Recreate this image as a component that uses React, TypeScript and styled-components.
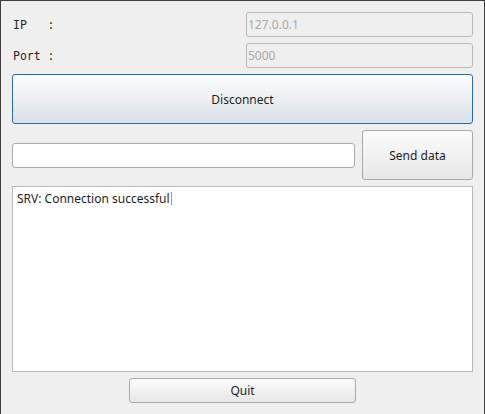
import React from "react";
import styled, { createGlobalStyle } from "styled-components";

const Global = createGlobalStyle`
  html, body { margin: 0; padding: 0; background: #efefef; }
  * { box-sizing: border-box; }
`;

const Window = styled.div`
  width: 485px;
  height: 414px;
  background: #efefef;
  border: 1px solid #3c3c3c;
  border-bottom: none;
  padding: 11px 11px 0 11px;
  display: flex;
  flex-direction: column;
  gap: 6px;
  font-family: "Noto Sans", "Open Sans", sans-serif;
  font-size: 12px;
  color: #1e1e1e;
`;

const Form = styled.div`
  display: grid;
  grid-template-columns: 1fr 227px;
  row-gap: 6px;
  align-items: center;
`;

const Label = styled.div`
  font-family: "DejaVu Sans Mono", "Liberation Mono", monospace;
  font-size: 11.5px;
  white-space: pre;
  color: #2b2620;
  padding-left: 1px;
`;

const Field = styled.input<{ $disabled?: boolean }>`
  height: 25px;
  width: 100%;
  margin: 0;
  border: 1px solid ${(p) => (p.$disabled ? "#b9b9b9" : "#aaaaaa")};
  border-radius: 3px;
  background: ${(p) => (p.$disabled ? "#efefef" : "#ffffff")};
  color: #a9a9a9;
  font-family: "Noto Sans", "Open Sans", sans-serif;
  font-size: 12px;
  padding: 0 1px;
  outline: none;
  &:disabled { color: #a9a9a9; -webkit-text-fill-color: #a9a9a9; opacity: 1; }
`;

const Button = styled.button<{ $primary?: boolean; $tall?: boolean }>`
  height: ${(p) => (p.$tall ? "50px" : "25px")};
  margin: 0;
  padding: 0;
  border-radius: 3px;
  border: 1px solid ${(p) => (p.$primary ? "#2e6da4" : "#a9a9a9")};
  background: ${(p) =>
    p.$primary
      ? "linear-gradient(to bottom, #fbfcfd 0%, #eef1f4 45%, #d9e0e8 100%)"
      : "linear-gradient(to bottom, #fcfcfc 0%, #f1f1f1 50%, #e7e7e7 100%)"};
  font-family: "Noto Sans", "Open Sans", sans-serif;
  font-size: 12px;
  color: #1e1e1e;
`;

const SendRow = styled.div`
  display: flex;
  align-items: center;
  gap: 7px;
`;

const SendInput = styled(Field)`
  flex: 1;
`;

const SendButton = styled(Button)`
  width: 111px;
  flex: none;
`;

const Log = styled.div`
  height: 186px;
  background: #ffffff;
  border: 1px solid #b8b8b8;
  padding: 3px 4px;
  font-size: 12px;
  color: #1e1e1e;
  line-height: 17px;
`;

const Caret = styled.span`
  display: inline-block;
  width: 1px;
  height: 13px;
  background: #6aa6e6;
  vertical-align: -2px;
  margin-left: 1px;
`;

const Footer = styled.div`
  display: flex;
  justify-content: center;
`;

const QuitButton = styled(Button)`
  width: 227px;
`;

export default function App() {
  return (
    <>
      <Global />
      <Window>
        <Form>
          <Label>{"IP   :"}</Label>
          <Field $disabled disabled defaultValue="127.0.0.1" />
          <Label>{"Port :"}</Label>
          <Field $disabled disabled defaultValue="5000" />
        </Form>
        <Button $primary $tall>Disconnect</Button>
        <SendRow>
          <SendInput />
          <SendButton $tall>Send data</SendButton>
        </SendRow>
        <Log>
          SRV: Connection successful<Caret />
        </Log>
        <Footer>
          <QuitButton>Quit</QuitButton>
        </Footer>
      </Window>
    </>
  );
}
